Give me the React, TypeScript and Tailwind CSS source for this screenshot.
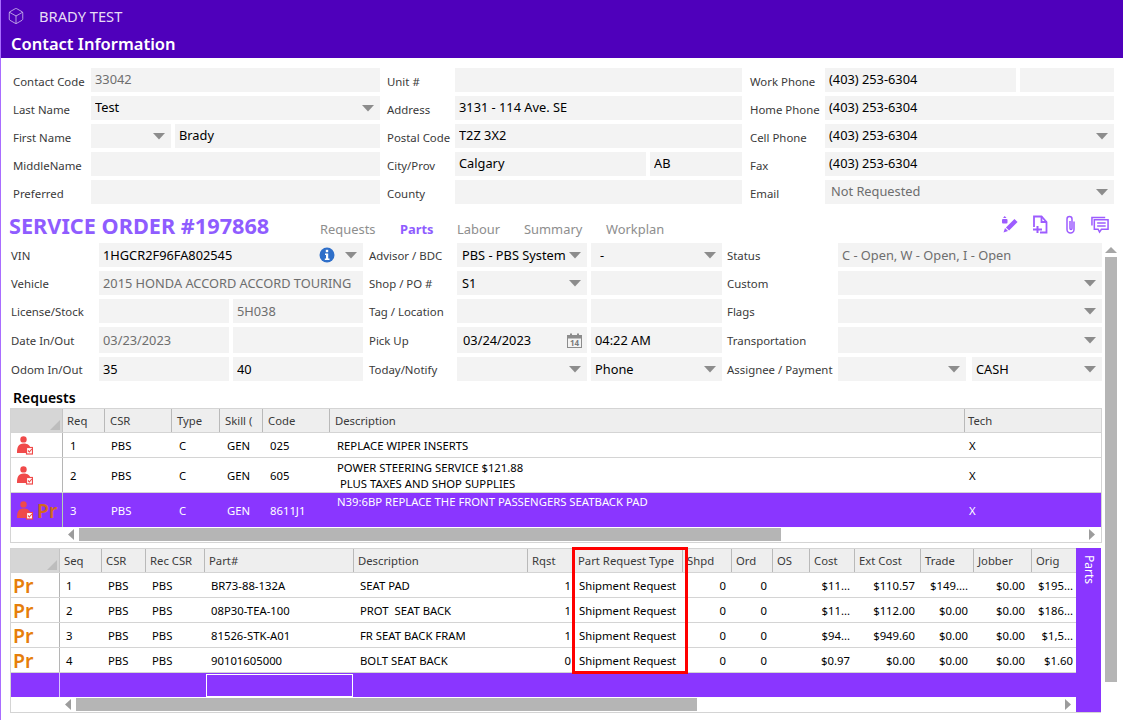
import React from 'react';
import { Box } from 'lucide-react';

const Arrow = ({ className = '' }: { className?: string }) => (
  <svg width="12" height="7" viewBox="0 0 12 7" className={`shrink-0 ${className}`}>
    <polygon points="0,0 12,0 6,6.5" fill="#8c8c8c" />
  </svg>
);

type FieldProps = {
  text?: string;
  gray?: boolean;
  arrow?: boolean;
  className?: string;
  pad?: string;
  lift?: string;
  children?: React.ReactNode;
};

const Field = ({ text, gray, arrow, className = 'flex-1', pad = 'pl-1', lift = 'pb-[3px]', children }: FieldProps) => (
  <div className={`flex items-center min-w-0 bg-[#f3f3f3] ${pad} ${className}`}>
    <span className={`flex-1 text-[12.8px] whitespace-nowrap overflow-hidden ${lift} ${gray ? 'text-[#6e6e6e]' : 'text-black'}`}>{text}</span>
    {children}
    {arrow && <Arrow className="mr-[6px]" />}
  </div>
);

// service order fields sit a little lower than the contact ones
const F = (props: FieldProps) => <Field {...props} lift="pb-px" />;

const Label = ({ text, top = 'pt-[3px]' }: { text: string; top?: string }) => (
  <div className={`flex items-center whitespace-nowrap text-[11.4px] text-[#3a3a3a] ${top}`}>{text}</div>
);

const L = ({ text }: { text: string }) => <Label text={text} top="pt-[2px]" />;

const UserCheck = () => (
  <svg width="16" height="19" viewBox="0 0 16 19" className="shrink-0">
    <circle cx="6.5" cy="3.4" r="3.2" fill="#f04a4a" />
    <path d="M0 17c0-6 1.5-9.5 6.5-9.5S13 10 13 11H9v6H0z" fill="#f04a4a" />
    <rect x="9.5" y="11.5" width="6" height="6.5" fill="#fff" stroke="#f04a4a" strokeWidth="1.2" />
    <path d="M11 14.5l1.4 1.5 2.4-3" fill="none" stroke="#f04a4a" strokeWidth="1.1" />
  </svg>
);

const Pr = ({ className = 'text-[#e67e0a]' }: { className?: string }) => (
  <span className={`font-semibold text-[19.5px] leading-none pt-[2px] ${className}`}>Pr</span>
);

const Corner = () => (
  <div className="flex items-end justify-end bg-[#d6d6d6] border-r border-[#c4c4c4] pr-[2px] pb-[2px]">
    <svg width="10" height="10" viewBox="0 0 10 10">
      <polygon points="10,0 10,10 0,10" fill="#bdbdbd" />
    </svg>
  </div>
);

const Head = ({ text, pad = 'pl-1' }: { text: string; pad?: string }) => (
  <div className={`flex items-center pt-px bg-[#eeeeee] border-r border-[#b9b9b9] overflow-hidden whitespace-nowrap text-[#3a3a3a] ${pad}`}>
    {text}
  </div>
);

const Cell = ({ text, className = 'pl-[7px]' }: { text: string; className?: string }) => (
  <div className={`flex items-center pt-px overflow-hidden whitespace-nowrap ${className}`}>{text}</div>
);

const HBar = ({ pad, thumb, gap, end }: { pad: string; thumb: string; gap: string; end: string }) => (
  <div className={`flex items-center h-[15px] ${pad} ${end}`}>
    <svg width="6" height="11" viewBox="0 0 6 11" className="shrink-0">
      <polygon points="6,0 6,11 0,5.5" fill="#9c9c9c" />
    </svg>
    <div className={`h-[13px] bg-[#b5b5b5] ${gap} ${thumb}`} />
    <svg width="6" height="11" viewBox="0 0 6 11" className="shrink-0 ml-auto">
      <polygon points="0,0 0,11 6,5.5" fill="#9c9c9c" />
    </svg>
  </div>
);

const reqCols = 'grid grid-cols-[52px_42px_67px_48px_43px_67px_635px_136px]';
const reqData = [
  { req: '1', code: '025', h: 'h-[25px]', desc: ['REPLACE WIPER INSERTS'] },
  { req: '2', code: '605', h: 'h-[35px]', desc: ['POWER STEERING SERVICE $121.88', '\u00a0PLUS TAXES AND SHOP SUPPLIES'] },
];

const partCols = 'grid grid-cols-[49px_42px_44px_59px_149px_174px_46px_109px_49px_41px_37px_45px_66px_53px_58px_44px]';
const partHeads = ['Seq', 'CSR', 'Rec CSR', 'Part#', 'Description', 'Rqst', 'Part Request Type', 'Shpd', 'Ord', 'OS', 'Cost', 'Ext Cost', 'Trade', 'Jobber', 'Orig'];
const partData = [
  ['1', 'BR73-88-132A', 'SEAT PAD', '1', '$11...', '$110.57', '$149....', '$0.00', '$195...'],
  ['2', '08P30-TEA-100', 'PROT  SEAT BACK', '1', '$11...', '$112.00', '$0.00', '$0.00', '$186...'],
  ['3', '81526-STK-A01', 'FR SEAT BACK FRAM', '1', '$94...', '$949.60', '$0.00', '$0.00', '$1,5...'],
  ['4', '90101605000', 'BOLT SEAT BACK', '0', '$0.97', '$0.00', '$0.00', '$0.00', '$1.60'],
];

const App = () => {
  return (
    <div className="relative w-[1123px] h-[720px] overflow-hidden bg-white text-[11.3px] leading-[16px] font-['Noto_Sans','Open_Sans',sans-serif] border-l border-[#a96dff]">
      {/* Title bar */}
      <div className="h-[58px] -ml-px bg-[#4f00bb]">
        <div className="flex items-center h-[31px] pl-[7px]">
          <Box size={18} strokeWidth={1} className="text-[#d9cdf0]" />
          <span className="ml-[14px] text-[14.7px] text-[#e6dcf5]">BRADY TEST</span>
        </div>
        <div className="pl-[11px] pt-px text-[16.5px] leading-[24px] font-semibold text-white">Contact Information</div>
      </div>

      {/* Contact */}
      <div className="flex pt-[10px] pl-[12px]">
        <div className="grid grid-cols-[78px_289px] auto-rows-[24px] gap-y-1">
          <Label text="Contact Code" />
          <Field text="33042" gray />
          <Label text="Last Name" />
          <Field text="Test" arrow />
          <Label text="First Name" />
          <div className="flex gap-1">
            <Field className="w-[80px]" arrow />
            <Field text="Brady" />
          </div>
          <Label text="MiddleName" />
          <Field />
          <Label text="Preferred" />
          <Field />
        </div>
        <div className="grid grid-cols-[68px_287px] auto-rows-[24px] gap-y-1 ml-[7px]">
          <Label text="Unit #" />
          <Field />
          <Label text="Address" />
          <Field text="3131 - 114 Ave. SE" />
          <Label text="Postal Code" />
          <Field text="T2Z 3X2" />
          <Label text="City/Prov" />
          <div className="flex gap-1">
            <Field text="Calgary" className="w-[191px]" />
            <Field text="AB" />
          </div>
          <Label text="County" />
          <Field />
        </div>
        <div className="grid grid-cols-[75px_289px] auto-rows-[24px] gap-y-1 ml-[8px]">
          <Label text="Work Phone" />
          <div className="flex gap-1">
            <Field text="(403) 253-6304" className="w-[191px]" />
            <Field />
          </div>
          <Label text="Home Phone" />
          <Field text="(403) 253-6304" />
          <Label text="Cell Phone" />
          <Field text="(403) 253-6304" arrow />
          <Label text="Fax" />
          <Field text="(403) 253-6304" />
          <Label text="Email" />
          <Field text="Not Requested" gray arrow pad="pl-[6px]" />
        </div>
      </div>

      {/* Service order header */}
      <div className="relative flex items-center h-[31px] mt-[8px] pl-[8px]">
        <div className="w-[311px] mb-[4px] text-[21.7px] leading-[28px] font-bold text-[#8f5cff] whitespace-nowrap">SERVICE ORDER #197868</div>
        <div className="flex items-center pt-[2px] text-[12.9px] text-[#8e8e8e]">
          <span className="w-[80px]">Requests</span>
          <span className="w-[57px] font-bold text-[#8f5cff]">Parts</span>
          <span className="w-[67px]">Labour</span>
          <span className="w-[82px]">Summary</span>
          <span>Workplan</span>
        </div>
        <div className="ml-auto mr-[14px] mb-[6px] flex items-center gap-[11px] text-[#9d5cff]">
          <svg width="19" height="19" viewBox="0 0 19 19" fill="none">
            <rect x="1" y="4" width="5.500" height="4.500" rx="1" fill="currentColor" />
            <path d="M2 3l1.700-2L5.500 3" fill="currentColor" />
            <path d="M6.500 14l8.500-8.500" stroke="currentColor" strokeWidth="4.400" />
            <path d="M2.500 17.500l1.500-4.500 3 3z" fill="currentColor" />
          </svg>
          <svg width="19" height="19" viewBox="0 0 19 19" fill="none" stroke="currentColor" strokeWidth="1.800">
            <path d="M3 12V1.500h7.500l5 5.500v10.500H9" />
            <path d="M10.500 1.500V7H16" />
            <path d="M6.500 11v7M2 14.500h9" strokeWidth="2" />
          </svg>
          <svg width="19" height="19" viewBox="0 0 19 19" fill="none" stroke="currentColor" strokeWidth="1.500">
            <path d="M13 6.500v8a3.500 3.500 0 0 1-7 0V4a2.500 2.500 0 0 1 5 0v9.500a1 1 0 0 1-2 0V6" />
          </svg>
          <svg width="18" height="18" viewBox="0 0 19 19" fill="none" stroke="currentColor" strokeWidth="1.600">
            <path d="M1 10V1.500h14" />
            <path d="M3.500 4h14.500v10h-7l-2 3-1.500-3h-4z" />
            <path d="M6.500 7.500h9M6.500 10.500h9" />
          </svg>
        </div>
      </div>

      {/* Body + page scrollbar */}
      <div className="flex">
        <div className="w-[1104px] shrink-0">
          <div className="flex pl-[10px]">
            <div className="grid grid-cols-[88px_264px] grid-rows-[24px_24px_24px_26px_24px] gap-y-1">
              <L text="VIN" />
              <F text="1HGCR2F96FA802545" arrow>
                <svg width="16" height="16" viewBox="0 0 16 16" className="mr-[10px] shrink-0">
                  <circle cx="8" cy="8" r="7.500" fill="#2f6fc9" />
                  <rect x="6.800" y="2.800" width="2.400" height="2.400" fill="#fff" />
                  <path d="M6 6.500h3.200v5H10.500V13H5.800v-1.500H7V8H6z" fill="#fff" />
                </svg>
              </F>
              <L text="Vehicle" />
              <F text="2015 HONDA ACCORD ACCORD TOURING" gray />
              <L text="License/Stock" />
              <div className="flex gap-1">
                <F className="w-[130px]" />
                <F text="5H038" gray />
              </div>
              <L text="Date In/Out" />
              <div className="flex gap-1">
                <F text="03/23/2023" gray className="w-[130px]" />
                <F />
              </div>
              <L text="Odom In/Out" />
              <div className="flex gap-1">
                <F text="35" className="w-[130px]" />
                <F text="40" />
              </div>
            </div>
            <div className="grid grid-cols-[88px_265px] grid-rows-[24px_24px_24px_26px_24px] gap-y-1 ml-[6px]">
              <L text="Advisor / BDC" />
              <div className="flex gap-1">
                <F text="PBS - PBS System" arrow className="w-[130px]" pad="pl-[5px]" />
                <F text="-" arrow pad="pl-[9px]" />
              </div>
              <L text="Shop / PO #" />
              <div className="flex gap-1">
                <F text="S1" arrow className="w-[130px]" pad="pl-[5px]" />
                <F />
              </div>
              <L text="Tag / Location" />
              <div className="flex gap-1">
                <F className="w-[130px]" />
                <F />
              </div>
              <L text="Pick Up" />
              <div className="flex gap-1">
                <F text="03/24/2023" className="w-[130px]" pad="pl-[6px]">
                  <svg width="15" height="15" viewBox="0 0 15 15" className="mr-[5px] shrink-0">
                    <rect x="0.500" y="2.500" width="14" height="12" fill="#f3f3f3" stroke="#8c8c8c" />
                    <rect x="0.500" y="2.500" width="14" height="3" fill="#8c8c8c" />
                    <rect x="3" y="0.500" width="2" height="3" fill="#8c8c8c" />
                    <rect x="10" y="0.500" width="2" height="3" fill="#8c8c8c" />
                    <text x="7.500" y="13" textAnchor="middle" fontSize="8" fontWeight="700" fill="#7a7a7a">14</text>
                  </svg>
                </F>
                <F text="04:22 AM" />
              </div>
              <L text="Today/Notify" />
              <div className="flex gap-1">
                <F arrow className="w-[130px]" />
                <F text="Phone" arrow />
              </div>
            </div>
            <div className="grid grid-cols-[111px_264px] grid-rows-[24px_24px_24px_26px_24px] gap-y-1 ml-[5px]">
              <L text="Status" />
              <F text="C - Open, W - Open, I - Open" gray />
              <L text="Custom" />
              <F arrow />
              <L text="Flags" />
              <F arrow />
              <L text="Transportation" />
              <F arrow />
              <L text="Assignee / Payment" />
              <div className="flex gap-[6px]">
                <F arrow className="w-[128px]" />
                <F text="CASH" arrow />
              </div>
            </div>
          </div>

          <div className="flex items-center h-[27px] pl-[12px] pt-[7px] text-[14px] font-semibold text-black">Requests</div>

          {/* Requests table */}
          <div className="ml-[9px] w-[1092px] border border-[#d4d4d4]">
            <div className={`${reqCols} h-[24px] border-b border-[#d4d4d4]`}>
              <Corner />
              <Head text="Req" />
              <Head text="CSR" pad="pl-[5px]" />
              <Head text="Type" pad="pl-[5px]" />
              <Head text="Skill (" pad="pl-[5px]" />
              <Head text="Code" pad="pl-[5px]" />
              <Head text="Description" pad="pl-[5px]" />
              <div className="flex items-center pl-[3px] pt-px bg-[#eeeeee] text-[#3a3a3a]">Tech</div>
            </div>
            {reqData.map((r) => (
              <div key={r.req} className={`${reqCols} ${r.h} border-b border-[#d4d4d4]`}>
                <div className="flex items-center pl-[6px] border-r border-[#b5b5b5]">
                  <UserCheck />
                </div>
                <Cell text={r.req} />
                <Cell text="PBS" className="pl-[6px]" />
                <Cell text="C" />
                <Cell text="GEN" />
                <Cell text={r.code} />
                <div className="flex flex-col justify-center pl-[7px] pt-px whitespace-pre">
                  {r.desc.map((d) => (
                    <div key={d}>{d}</div>
                  ))}
                </div>
                <Cell text="X" className="pl-[4px]" />
              </div>
            ))}
            <div className={`${reqCols} h-[34px] bg-[#8a36ff] text-white`}>
              <div className="flex items-center gap-[4px] pl-[6px] border-r border-[#b5cfb5]">
                <UserCheck />
                <Pr className="text-[#d2691e]" />
              </div>
              <Cell text="3" />
              <Cell text="PBS" className="pl-[6px]" />
              <Cell text="C" />
              <Cell text="GEN" />
              <Cell text="8611J1" />
              <div className="pl-[7px] pt-[1px] whitespace-nowrap">N39:6BP REPLACE THE FRONT PASSENGERS SEATBACK PAD</div>
              <Cell text="X" className="pl-[4px]" />
            </div>
            <HBar pad="pl-[57px]" gap="ml-[5px]" thumb="w-[702px]" end="pr-[6px]" />
          </div>

          {/* Parts table */}
          <div className="relative flex mt-[5px] ml-[9px]">
            <div className="w-[1066px] border border-r-0 border-[#d4d4d4]">
              <div className={`${partCols} h-[24px] border-b border-[#d4d4d4]`}>
                <Corner />
                {partHeads.map((h, i) =>
                  i === partHeads.length - 1 ? (
                    <div key={h} className="flex items-center pl-1 pt-px bg-[#eeeeee] text-[#3a3a3a]">{h}</div>
                  ) : (
                    <Head key={h} text={h} />
                  ),
                )}
              </div>
              {partData.map((p) => (
                <div key={p[0]} className={`${partCols} h-[25px] border-b border-[#d4d4d4]`}>
                  <div className="flex items-center pl-[2px] border-r border-[#b5b5b5]">
                    <Pr />
                  </div>
                  <Cell text={p[0]} className="pl-[6px]" />
                  <Cell text="PBS" className="pl-[6px]" />
                  <Cell text="PBS" className="pl-[6px]" />
                  <Cell text={p[1]} className="pl-[6px]" />
                  <Cell text={p[2]} className="pl-[6px] whitespace-pre" />
                  <Cell text={p[3]} className="justify-end pr-[3px]" />
                  <Cell text="Shipment Request" className="pl-[5px]" />
                  <Cell text="0" className="justify-end pr-[6px]" />
                  <Cell text="0" className="justify-end pr-[6px]" />
                  <div />
                  <Cell text={p[4]} className="justify-end pr-[5px]" />
                  <Cell text={p[5]} className="justify-end pr-[6px]" />
                  <Cell text={p[6]} className="justify-end pr-[6px]" />
                  <Cell text={p[7]} className="justify-end pr-[7px]" />
                  <Cell text={p[8]} className="justify-end pr-[3px]" />
                </div>
              ))}
              <div className={`${partCols} h-[24px] bg-[#8a36ff]`}>
                <div className="border-r border-[#d8c4ff]" />
                <div />
                <div />
                <div />
                <div className="mx-px mt-px border border-white" />
              </div>
              <HBar pad="pl-[54px]" gap="ml-[5px]" thumb="w-[621px]" end="pr-[5px]" />
            </div>
            <div className="w-[25px] bg-[#8a36ff] flex justify-center pt-[7px] text-[12px] text-white border-b border-[#d4d4d4]">
              <span className="[writing-mode:vertical-rl]">Parts</span>
            </div>
            {/* annotation over the Part Request Type column */}
            <div className="absolute left-[562px] top-[-1px] w-[116px] h-[127px] border-[3px] border-[#ff0000]" />
          </div>
        </div>

        {/* Page scrollbar */}
        <div className="w-[12px] flex flex-col items-center">
          <svg width="12" height="6" viewBox="0 0 12 6" className="mt-[4px] shrink-0">
            <polygon points="0,6 12,6 6,0" fill="#a6a6a6" />
          </svg>
          <div className="w-[12px] h-[425px] mt-[4px] bg-[#b5b5b5]" />
        </div>
      </div>
    </div>
  );
};

export default App;
